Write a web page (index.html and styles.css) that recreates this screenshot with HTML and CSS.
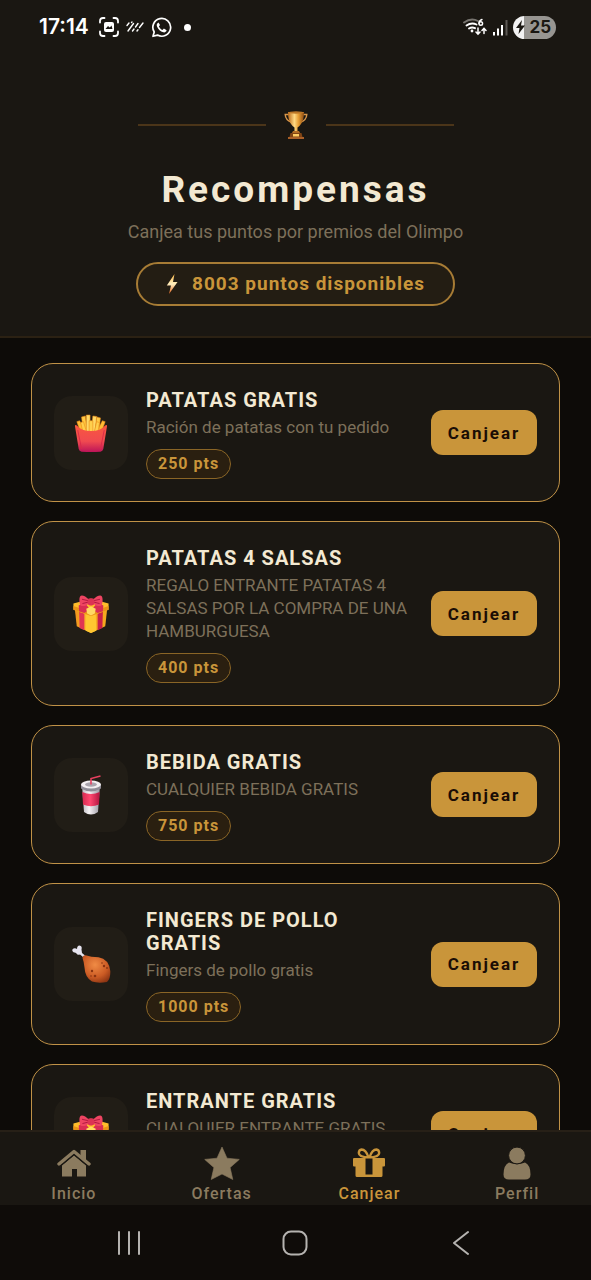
FILE: index.html
```html
<!DOCTYPE html>
<html lang="es">
<head>
<meta charset="utf-8">
<meta name="viewport" content="width=device-width, initial-scale=1">
<title>Recompensas</title>
<link rel="stylesheet" href="styles.css">
</head>
<body>
<svg class="defs" aria-hidden="true">
  <defs>
    <linearGradient id="gold" x1="0" x2="1"><stop offset="0" stop-color="#b9691a"/><stop offset=".4" stop-color="#ffd983"/><stop offset=".65" stop-color="#e79f35"/><stop offset="1" stop-color="#8b4a12"/></linearGradient>
    <linearGradient id="red" x1="0" y1="0" x2="0" y2="1"><stop offset="0" stop-color="#f9573f"/><stop offset=".6" stop-color="#f04a50"/><stop offset="1" stop-color="#bd1459"/></linearGradient>
    <linearGradient id="boxl" x1="0" y1="0" x2="1" y2="0"><stop offset="0" stop-color="#f0921c"/><stop offset="1" stop-color="#ffc832"/></linearGradient>
    <linearGradient id="cup" x1="0" y1="0" x2="1" y2="0"><stop offset="0" stop-color="#b9b6bd"/><stop offset=".4" stop-color="#f7f4f6"/><stop offset="1" stop-color="#98959f"/></linearGradient>
    <linearGradient id="cupred" x1="0" y1="0" x2="1" y2="0"><stop offset="0" stop-color="#d62a50"/><stop offset=".45" stop-color="#ff4870"/><stop offset="1" stop-color="#b21640"/></linearGradient>
    <radialGradient id="meat" cx=".45" cy=".35" r=".75"><stop offset="0" stop-color="#f08b45"/><stop offset=".6" stop-color="#cb5b24"/><stop offset="1" stop-color="#853011"/></radialGradient>
    <linearGradient id="bolt" x1="0" y1="0" x2="0" y2="1"><stop offset="0" stop-color="#ffb640"/><stop offset=".5" stop-color="#fff0c0"/><stop offset="1" stop-color="#e8641c"/></linearGradient>
  </defs>
  <symbol id="gift" viewBox="0 0 40 40">
    <path d="M3 15 20 20v20L5 33Z" fill="url(#boxl)"/>
    <path d="M37 15 20 20v20l15-7Z" fill="#f6a81f"/>
    <path d="M15 18.500 25 18.500 25.500 37.600 20 40 14.500 37.600Z" fill="#ffc631"/>
    <path d="M7.500 16.500 13 18v19l-5-2.200Z" fill="#e03453"/>
    <path d="M32.500 16.500 27 18v19l5-2.200Z" fill="#c91f48"/>
    <path d="M1.500 9 20 4l18.500 5v6.500L20 22 1.500 15.500Z" fill="#ffbd2b"/>
    <path d="M1.500 11.500 20 18l18.500-6.500v4L20 22 1.500 15.500Z" fill="#eb9318"/>
    <path d="m7 11 6-3 6 7-6 4-5.500-2ZM33 11l-6-3-6 7 6 4 5.500-2Z" fill="#d92d52"/>
    <path d="m20 12 5 2.500-1 5-4 2-4-2-1-5Z" fill="#ffd964"/>
    <path d="M18 5C14 1 10-.5 8.500 1.500 7.500 3 7.500 9 9 11c2 1.500 6 .5 9-2ZM22 5c4-4 8-5.500 9.500-3.500 1 1.500 1 7.500-.5 9.500-2 1.500-6 .5-9-2Z" fill="#ee4562"/>
    <path d="M17 6 10.500 4.500M17 7.500 11 9M23 6l6.500-1.500M23 7.500 29 9" stroke="#ad173e" stroke-width="1"/>
    <rect x="16.500" y="3.500" width="7" height="7.500" rx="2.500" fill="#dc3354"/>
  </symbol>
</svg>

<header class="hero">
  <div class="status">
    <div class="status-side">
      <span class="clock">17:14</span>
      <svg width="20" height="20" viewBox="0 0 20 20" fill="none" stroke="#fff" stroke-width="1.800" stroke-linecap="round"><path d="M1 5.500V4Q1 1 4 1H5.500M14.500 1H16Q19 1 19 4V5.500M19 14.500V16q0 3-3 3H14.500M5.500 19H4Q1 19 1 16V14.500"/><rect x="5" y="5" width="10" height="10" rx="2" fill="#fff" stroke="none"/><path d="m6.500 12 2.500-3 1.800 1.500 1.700-2 1 3.500Z" fill="#1a1712" stroke="none"/></svg>
      <svg width="18" height="12" viewBox="0 0 18 12" fill="none" stroke="#fff" stroke-width="1.400" stroke-linecap="round"><path d="M1 4.500 3 2M2 10 7.500 2.500M6.500 10l1.500-2M9.500 6l2.500-3.500M11 10l1-1.300M13.500 6.500 17 2M5.500 1.500 6 1"/></svg>
      <svg width="21" height="21" viewBox="0 0 21 21"><path d="M2 19.300 3.200 15A8.900 8.900 0 1 1 6.500 18.100Z" fill="none" stroke="#fff" stroke-width="1.700" stroke-linejoin="round"/><path d="M7.500 5.500c-1.500.8-2.200 2.200-1.500 4 1.200 3 3.400 5 6.300 5.800 1.500.4 3-.5 3.300-2.100l-2.700-1.600-1.400 1.300c-1.700-.7-2.900-1.900-3.600-3.500l1.100-1.300Z" fill="#fff"/></svg>
      <span class="dot"></span>
    </div>
    <div class="status-side status-right">
      <svg width="24" height="20" viewBox="0 0 24 20" fill="none" stroke-linecap="round"><path d="M1 5.500Q8 .5 15 4" stroke="#77746f" stroke-width="1.900"/><path d="M3.500 8.500q5-3.500 10-1" stroke="#fff" stroke-width="1.900"/><path d="M6 11.500q3-2 6-.3" stroke="#fff" stroke-width="1.900"/><circle cx="9" cy="14" r="1.400" fill="#fff"/><path d="M19 2.500q-3 1-3 4" stroke="#fff" stroke-width="1.400"/><circle cx="17.800" cy="6.500" r="1.800" stroke="#fff" stroke-width="1.400"/><path d="M15 11v6m-2-2 2 2.200 2-2.200M21 16.500v-5m-2 2 2-2.200 2 2.200" stroke="#fff" stroke-width="1.500"/></svg>
      <svg width="16" height="17" viewBox="0 0 16 17"><path d="M1 13h2v3.500H1ZM5 9.500h2v7H5ZM9 6h2v10.500H9Z" fill="#fff"/><path d="M13.500 1h2v15.500h-2Z" fill="#5c5954"/></svg>
      <span class="battery"><svg width="9" height="14" viewBox="0 0 9 14"><path d="M6 0 0 8h3.500L2.500 14 9 5.500H5Z" fill="#1a1712"/></svg>25</span>
    </div>
  </div>
  <div class="ornament">
    <span class="rule"></span>
    <svg width="24" height="28" viewBox="0 0 24 28"><path d="M5 3.500H1.200Q1.500 9.500 8 11.500M19 3.500h3.800Q22.500 9.500 16 11.500" fill="none" stroke="#d8964a" stroke-width="1.400"/><path d="M4 1h16q0 8-3 12-2 3-3.500 3.500V20h-3v-3.500Q9 16 7 13 4 9 4 1Z" fill="url(#gold)"/><ellipse cx="12" cy="1.500" rx="8" ry="1.200" fill="#bd7828"/><path d="M9 20h6l1 2H8Z" fill="#b36c25"/><path d="M6.500 22h11l1 4h-13Z" fill="#804414"/><path d="M9 23h6v2.500H9Z" fill="#ffcb62"/><path d="M4 26h16v2H4Z" fill="#a95f27"/></svg>
    <span class="rule"></span>
  </div>
  <h1>Recompensas</h1>
  <p class="tagline">Canjea tus puntos por premios del Olimpo</p>
  <p class="balance"><svg width="12" height="20" viewBox="0 0 12 20"><path d="M8.500 0 .8 11.500H5L3 20l8.500-12H7Z" fill="url(#bolt)"/></svg>8003 puntos disponibles</p>
</header>

<main class="rewards">
  <article class="card">
    <div class="tile"><svg width="34" height="38" viewBox="0 0 36 40"><g stroke="#e98a17" stroke-width=".6"><path d="m3 8 3-1 6 12-4 3ZM33 8l-3-1-6 12 4 3Z" fill="#ffbd35"/><path d="m8 3 4-1 2 17h-4ZM28 4l-4-1-2 17h4Z" fill="#ffc943"/><path d="M13 1h4v20h-4ZM20 2l4 .5-2 18h-4Z" fill="#ffd966"/><path d="m7 9 3-1 4 13h-4ZM27 9l-3-1-3 13h4ZM16 7h4v14h-4Z" fill="#ffcf4c"/></g><path d="M1 12.500q0-1.500 2-.5 5 6 15 6t15-6q2-1 2 .5L31 37q-.5 2.500-3 2.800-10 .6-20 0Q5.500 39.500 5 37Z" fill="url(#red)"/><path d="m4 17 4 20M32 17l-4 20" stroke="#d92848" stroke-width="1"/></svg></div>
    <div class="info"><h2>PATATAS GRATIS</h2><p>Ración de patatas con tu pedido</p><span class="pts">250 pts</span></div>
    <button class="redeem" type="button">Canjear</button>
  </article>
  <article class="card">
    <div class="tile"><svg width="38" height="38"><use href="#gift"/></svg></div>
    <div class="info"><h2>PATATAS 4 SALSAS</h2><p>REGALO ENTRANTE PATATAS 4 SALSAS POR LA COMPRA DE UNA HAMBURGUESA</p><span class="pts">400 pts</span></div>
    <button class="redeem" type="button">Canjear</button>
  </article>
  <article class="card">
    <div class="tile"><svg width="22" height="40" viewBox="0 0 22 40"><path d="m2 10 2 27q7 5 14 0l2-27Z" fill="url(#cup)"/><path d="M2.300 17q8.700 4 17.400 0L19 29.500q-8 3.500-16 0Z" fill="url(#cupred)"/><path d="M1 9.500v4q10 6 20 0v-4Z" fill="#8f8c96"/><ellipse cx="11" cy="9.500" rx="10" ry="4" fill="#f3eff1"/><ellipse cx="11" cy="9.500" rx="6" ry="2.200" fill="#a9a4ad"/><path d="M11 9.500V3.500L20.500 1" fill="none" stroke="#e8405f" stroke-width="1.600"/></svg></div>
    <div class="info"><h2>BEBIDA GRATIS</h2><p>CUALQUIER BEBIDA GRATIS</p><span class="pts">750 pts</span></div>
    <button class="redeem" type="button">Canjear</button>
  </article>
  <article class="card">
    <div class="tile"><svg width="40" height="38" viewBox="0 0 40 38"><path d="m12 12-3-2.500q-2.500 1-3.500-1-.5-1-3-1.300Q0 5 2.500 3.500 4.500 2.800 6 4 6 .5 8.500.5q3 .5 2 4L11 8l3 2.500Z" fill="#e6e4ef"/><path d="M11.500 13q0-2.500 3-2.800 5.500 2 13 2Q38 14 39.300 26q.3 8-3.300 11-9 1.500-15-.5-7-4-7.500-14Q13 17 11.500 13Z" fill="url(#meat)"/><g fill="#8a3412"><circle cx="21" cy="26" r="1.200"/><circle cx="24" cy="31" r="1.300"/><circle cx="20" cy="31" r=".8"/><circle cx="33" cy="21" r="1.200"/><circle cx="36" cy="23" r=".9"/><circle cx="31" cy="18" r=".8"/></g></svg></div>
    <div class="info"><h2>FINGERS DE POLLO GRATIS</h2><p>Fingers de pollo gratis</p><span class="pts">1000 pts</span></div>
    <button class="redeem" type="button">Canjear</button>
  </article>
  <article class="card">
    <div class="tile"><svg width="38" height="38"><use href="#gift"/></svg></div>
    <div class="info"><h2>ENTRANTE GRATIS</h2><p>CUALQUIER ENTRANTE GRATIS</p></div>
    <button class="redeem" type="button">Canjear</button>
  </article>
</main>

<nav class="tabs">
  <a href="#inicio"><svg width="34" height="34" viewBox="0 0 34 34"><path d="M17 9.500 29 19.500V30.500H20V23h-5v7.500H5V19.500Z" fill="currentColor"/><path d="M2 18 17 5.500 32 18" fill="none" stroke="currentColor" stroke-width="3.400" stroke-linejoin="round" stroke-linecap="round"/><path d="M23.500 4H29v11l-5.500-4.500Z" fill="currentColor"/><path d="M3.500 20 17 8.700 30.500 20" fill="none" stroke="#1a1712" stroke-width="1"/></svg>Inicio</a>
  <a href="#ofertas"><svg width="36" height="34" viewBox="0 0 36 34"><path d="m18 1 5 11.200 12.300 1.200-9.200 8.200 2.700 11.900L18 28 7.200 33.500 9.900 21.600.7 13.400 13 12.200Z" fill="currentColor" stroke="currentColor" stroke-linejoin="round" stroke-width=".6"/></svg>Ofertas</a>
  <a class="active" href="#canjear" aria-current="page"><svg width="34" height="34" viewBox="0 0 34 34"><path d="M16.500 11.500Q14 3.500 9.500 3.500 7 3.700 6.800 7q.2 4 9.700 4.500ZM17.500 11.500Q20 3.500 24.500 3.500q2.500.2 2.700 3.500-.2 4-9.700 4.500Z" fill="none" stroke="currentColor" stroke-width="2.400"/><path d="M2 12h30q1 0 1 1v6.500q0 1-1 1h-1.500V29.500q0 1.500-1.500 1.500H5q-1.500 0-1.500-1.500V20.500H2q-1 0-1-1V13q0-1 1-1Z" fill="currentColor"/><path d="M13.500 12.500h7v16h-7Z" fill="#1a1712"/></svg>Canjear</a>
  <a href="#perfil"><svg width="28" height="34" viewBox="0 0 28 34"><path d="M6 16.500Q14 20 22 16.500 27.500 19 27.500 28.500 27.500 33.500 22 33.500H6Q.5 33.500.5 28.500.5 19 6 16.500Z" fill="currentColor"/><circle cx="14" cy="9.500" r="8.400" fill="currentColor" stroke="#1a1712"/></svg>Perfil</a>
</nav>

<div class="system">
  <button type="button" aria-label="Recientes"><svg width="24" height="26" viewBox="0 0 24 26" stroke="#b5b3b0" stroke-width="2" stroke-linecap="round"><path d="M2 2v22M12 2v22M22 2v22"/></svg></button>
  <button type="button" aria-label="Inicio"><svg width="26" height="26" viewBox="0 0 26 26" fill="none" stroke="#b5b3b0" stroke-width="2"><rect x="1.500" y="1.500" width="23" height="23" rx="7.500"/></svg></button>
  <button type="button" aria-label="Atrás"><svg width="18" height="26" viewBox="0 0 18 26" fill="none" stroke="#b5b3b0" stroke-width="2" stroke-linecap="round" stroke-linejoin="round"><path d="M15 2 1 13l14 11"/></svg></button>
</div>
</body>
</html>
```
FILE: styles.css
```css
:root {
  --surface: #1a1712;
  --page: #0d0b08;
  --gold: #c9953a;
  --cream: #f3e9d2;
  --muted: #7d705a;
}

* {
  box-sizing: border-box;
}

body {
  margin: 0;
  height: 100vh;
  display: flex;
  flex-direction: column;
  overflow: hidden;
  background: var(--page);
  color: var(--cream);
  font-family: Roboto, "Liberation Sans", sans-serif;
}

h1, h2, p {
  margin: 0;
}

svg {
  display: block;
  flex: none;
}

.defs {
  position: absolute;
  width: 0;
  height: 0;
}

/* Header */
.hero {
  flex: none;
  display: flex;
  flex-direction: column;
  align-items: center;
  padding-bottom: 30px;
  background: var(--surface);
  border-bottom: 2px solid #2b2113;
}

.status {
  align-self: stretch;
  display: flex;
  justify-content: space-between;
  align-items: center;
  height: 54px;
  padding: 0 35px 0 39px;
  color: #fff;
}

.status-side {
  display: flex;
  align-items: center;
  gap: 7px;
}

.status-right {
  gap: 5px;
}

.clock {
  margin-right: 3px;
  font: 600 21px/24px Inter, Roboto, sans-serif;
}

.dot {
  width: 7px;
  height: 7px;
  margin-left: 5px;
  border-radius: 50%;
  background: #fff;
}

.battery {
  display: flex;
  align-items: center;
  gap: 4px;
  height: 23px;
  padding: 0 5px 0 3px;
  border-radius: 12px;
  background: linear-gradient(90deg, #f2f2f2 26%, #979591 26%);
  color: #1a1712;
  font: 700 17px/23px Inter, Roboto, sans-serif;
}

.ornament {
  display: flex;
  align-items: center;
  gap: 18px;
  margin-top: 57px;
}

.rule {
  width: 128px;
  height: 2px;
  background: #4b3519;
}

h1 {
  margin-top: 27px;
  font-size: 37px;
  line-height: 48px;
  font-weight: 700;
  letter-spacing: 3px;
}

.tagline {
  margin-top: 6px;
  color: var(--muted);
  font-size: 18px;
  line-height: 24px;
}

.balance {
  display: flex;
  align-items: center;
  gap: 14px;
  margin-top: 18px;
  padding: 0 28px;
  border: 2px solid #a77c35;
  border-radius: 22px;
  background: #231d13;
  color: var(--gold);
  font-size: 19px;
  line-height: 40px;
  font-weight: 700;
  letter-spacing: 1px;
}

/* Rewards */
.rewards {
  flex: 1;
  min-height: 0;
  overflow: hidden;
  display: flex;
  flex-direction: column;
  gap: 19px;
  padding: 25px 31px 0;
}

.card {
  flex: none;
  display: flex;
  align-items: center;
  gap: 18px;
  min-height: 139px;
  padding: 22px;
  border: 1px solid #c09247;
  border-radius: 22px;
  background: var(--surface);
}

.tile {
  flex: none;
  display: grid;
  place-items: center;
  width: 74px;
  height: 74px;
  border-radius: 18px;
  background: #211d16;
}

.info {
  flex: 1;
  align-self: stretch;
  min-width: 0;
  padding-top: 3px;
}

.info h2 {
  font-size: 20px;
  line-height: 23px;
  font-weight: 700;
  letter-spacing: 1px;
}

.info p {
  margin-top: 4px;
  color: var(--muted);
  font-size: 17px;
  line-height: 23px;
}

.pts {
  display: inline-block;
  margin-top: 10px;
  padding: 0 11px;
  border: 1px solid #8a6526;
  border-radius: 15px;
  background: #2a1f10;
  color: var(--gold);
  font-size: 16px;
  line-height: 28px;
  font-weight: 700;
  letter-spacing: 1px;
  vertical-align: top;
}

.redeem {
  flex: none;
  width: 106px;
  height: 45px;
  padding: 0;
  border: 0;
  border-radius: 12px;
  background: var(--gold);
  color: #1a0d05;
  font: 700 17px/24px Roboto, "Liberation Sans", sans-serif;
  letter-spacing: 2px;
}

/* Bottom navigation */
.tabs {
  flex: none;
  display: grid;
  grid-template-columns: repeat(4, 1fr);
  padding-top: 14px;
  border-top: 2px solid #272017;
  background: var(--surface);
}

.tabs a {
  display: flex;
  flex-direction: column;
  align-items: center;
  gap: 3px;
  color: #8b7b5f;
  font-size: 16px;
  line-height: 22px;
  font-weight: 500;
  letter-spacing: 1px;
  text-decoration: none;
}

.tabs .active {
  color: var(--gold);
}

.system {
  flex: none;
  display: grid;
  grid-template-columns: repeat(3, 1fr);
  height: 75px;
  padding: 0 46px;
  background: #0f0c09;
}

.system button {
  display: grid;
  place-items: center;
  padding: 0;
  border: 0;
  background: none;
}
```
